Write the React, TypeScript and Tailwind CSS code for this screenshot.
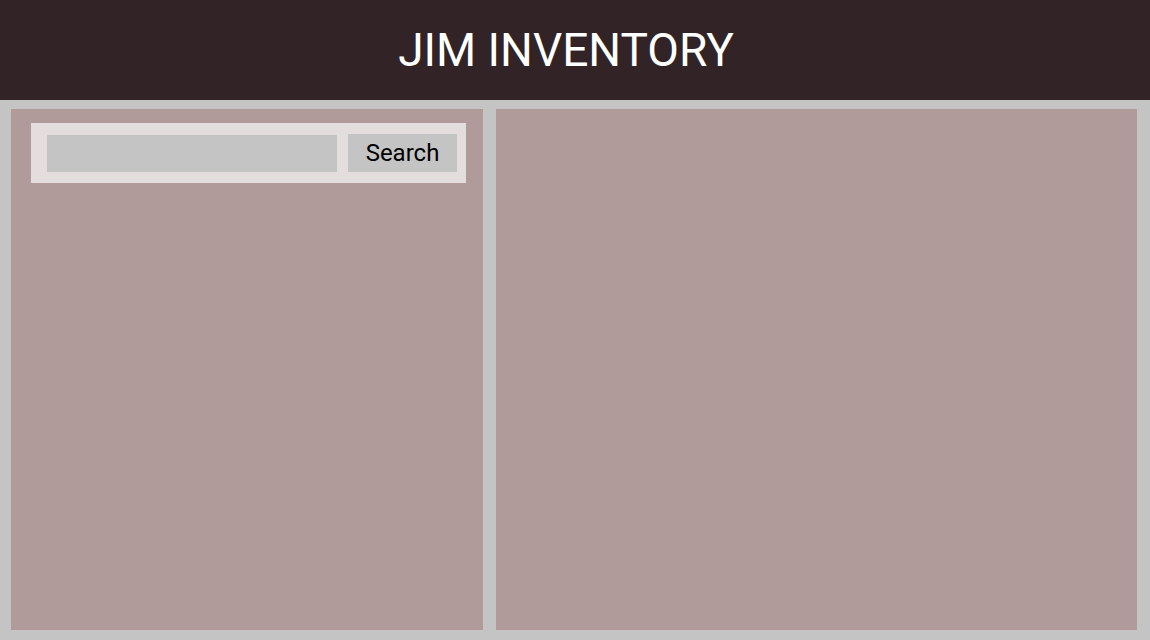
export default function App() {
  return (
    <div className="min-h-[640px] h-[640px] flex flex-col bg-[#c4c4c4]" style={{ fontFamily: "Roboto, 'Liberation Sans', sans-serif" }}>
      <header className="h-[100px] shrink-0 bg-[#322426] flex items-center justify-center pr-[18px]">
        <h1 className="text-white text-[46px] leading-none font-normal">JIM INVENTORY</h1>
      </header>
      <main className="flex-1 flex gap-[13px] pt-[9px] pl-[11px] pr-[13px] pb-[10px]">
        <section className="w-[472px] bg-[#b09b9a] pt-[14px] pl-[20px]">
          <div className="w-[435px] h-[60px] bg-[#e3dddd] flex items-start pl-[16px] pt-[11px]">
            <input className="w-[290px] h-[37px] mt-[1px] bg-[#c4c4c4] outline-none border-0" />
            <button className="ml-[11px] w-[109px] h-[38px] bg-[#c4c4c4] text-black text-[24px] leading-none">Search</button>
          </div>
        </section>
        <section className="flex-1 bg-[#b09b9a]" />
      </main>
    </div>
  );
}
